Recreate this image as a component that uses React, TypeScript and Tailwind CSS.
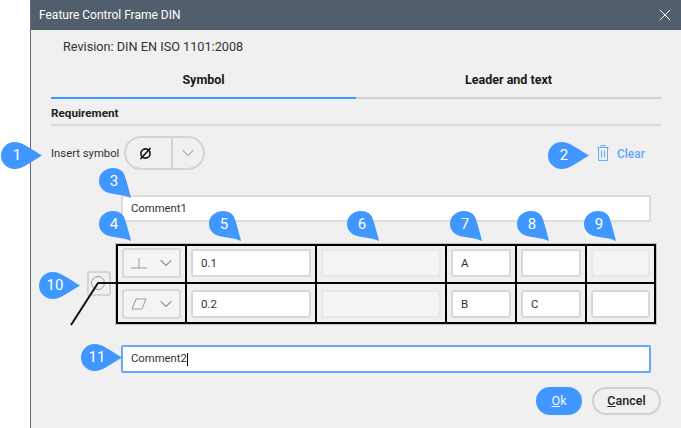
import { ChevronDown, X } from 'lucide-react';
import { FC, ReactNode } from 'react';

interface MarkerProps {
  label: string;
  pos: string;
}

// callout pointing right, tip on the middle line
const MarkerRight: FC<MarkerProps> = ({ label, pos }) => (
  <div className={`absolute h-[27px] w-[41px] ${pos}`}>
    <svg width="41" height="27" viewBox="0 0 41 27" className="absolute inset-0">
      <path d="M13.5 0C22 0 31 8 41 13.5C31 19 22 27 13.5 27A13.5 13.5 0 0 1 13.5 0Z" fill="#3f97ff" />
    </svg>
    <span className="absolute left-0 top-0 w-[32px] text-center text-[15px] leading-[27px] text-white">{label}</span>
  </div>
);

// callout pointing down and to the right
const MarkerDown: FC<MarkerProps> = ({ label, pos }) => (
  <div className={`absolute h-[32px] w-[34px] ${pos}`}>
    <svg width="34" height="32" viewBox="0 0 34 32" className="absolute inset-0">
      <path d="M1 14C1 6.5 7 1 15 1C21 1 25 4 26.5 8C29 15 31 23 33 31C25 27 16 28 9.5 25.5C4.5 23.5 1 19.5 1 14Z" fill="#3f97ff" />
    </svg>
    <span className="absolute left-0 top-0 w-[32px] text-center text-[15px] leading-[28px] text-white">{label}</span>
  </div>
);

const TextCell: FC<{ value?: string; disabled?: boolean }> = ({ value, disabled }) => (
  <div
    className={`h-[28px] w-full rounded-[3px] border-2 pl-[8px] text-[11.5px] leading-[24px] text-[#333] ${
      disabled ? 'border-[#e8e8e8] bg-[#f4f4f4]' : 'border-[#d8d8d8] bg-white'
    }`}
  >
    {value}
  </div>
);

const SelectCell: FC<{ children: ReactNode }> = ({ children }) => (
  <div className="flex h-[30px] w-full items-center justify-between rounded-[3px] border-2 border-[#d8d8d8] bg-[#f4f4f4] pl-[7px] pr-[3px]">
    <svg width="18" height="14" viewBox="0 0 18 14" fill="none" stroke="#999" strokeWidth="1">
      {children}
    </svg>
    <ChevronDown size={20} strokeWidth={1.4} color="#999" />
  </div>
);

const Cell: FC<{ children?: ReactNode; last?: boolean; bottom?: boolean }> = ({ children, last, bottom }) => (
  <div
    className={`flex h-[38px] items-center justify-center border-black px-[4px] ${last ? '' : 'border-r-2'} ${
      bottom ? 'pt-[2px]' : 'border-b-2 pb-[2px]'
    }`}
  >
    {children}
  </div>
);

export default function App() {
  return (
    <div className="relative flex h-[428px] w-[681px] overflow-hidden bg-white font-['Roboto',sans-serif]">
      <div className="ml-[30px] flex flex-1 flex-col border-l border-[#626d80] bg-[#f0f0f0]">
        <div className="flex h-[30px] shrink-0 items-center justify-between bg-[#525e6b] pl-[8px] pr-[6px] text-[12px] text-white">
          <span>Feature Control Frame DIN</span>
          <X size={20} strokeWidth={1.2} color="#fff" />
        </div>

        <div className="flex flex-1 flex-col px-[20px]">
          <div className="pl-[12px] pt-[10px] text-[12.7px] leading-[14px] text-[#333]">Revision: DIN EN ISO 1101:2008</div>

          <div className="mt-[13px] flex h-[32px] border-b-2 border-[#d0d0d0] text-[12.5px] font-bold text-[#1a1a1a]">
            <div className="-mb-[2px] w-[305px] border-b-2 border-[#3f97ff] pt-[4px] text-center">Symbol</div>
            <div className="flex-1 pt-[4px] text-center">Leader and text</div>
          </div>

          <div className="flex h-[27px] items-center border-b-2 border-[#d8d8d8] pt-[4px] text-[11.7px] font-bold text-[#222]">
            Requirement
          </div>

          <div className="mt-[10px] flex h-[34px] items-center">
            <span className="w-[73px] pt-[2px] text-[11.3px] text-[#333]">Insert symbol</span>
            <div className="flex h-[34px] w-[81px] items-center rounded-full border-2 border-[#d4d4d4]">
              <div className="flex h-full w-[47px] items-center justify-center border-r-2 border-[#d4d4d4] pr-[6px]">
                <svg width="13" height="13" viewBox="0 0 13 13" fill="none" stroke="#111" strokeWidth="1.6">
                  <circle cx="6.5" cy="6.5" r="4.6" />
                  <path d="M1.5 12L11.5 1" />
                </svg>
              </div>
              <div className="flex flex-1 items-center justify-center">
                <ChevronDown size={20} strokeWidth={1.2} color="#888" />
              </div>
            </div>
            <div className="ml-auto mr-[16px] flex items-center text-[12px] font-medium text-[#66a8ff]">
              <svg width="12" height="16" viewBox="0 0 12 16" fill="none" stroke="#66a8ff" strokeWidth="1" className="mr-[8px]">
                <path d="M0.5 2.5H11.5M4 2.5V0.5H8V2.5M1.5 2.5V15.5H10.5V2.5M4.5 5.5V12.5M7.5 5.5V12.5" />
              </svg>
              <span className="pt-[2px]">Clear</span>
            </div>
          </div>

          <div className="ml-[70px] mt-[25px] h-[27px] w-[530px] rounded-[2px] border-2 border-[#dcdcdc] bg-white pl-[8px] text-[11.3px] leading-[24px] text-[#333]">
            Comment1
          </div>

          <div className="ml-[65px] mt-[22px] grid w-[540px] grid-cols-[69px_130px_130px_70px_70px_67px] border-2 border-black shadow-[0_0_0_1px_#c4c4c4]">
            <Cell>
              <SelectCell>
                <path d="M0 12H16M8 2V12" />
              </SelectCell>
            </Cell>
            <Cell>
              <TextCell value="0.1" />
            </Cell>
            <Cell>
              <TextCell disabled />
            </Cell>
            <Cell>
              <TextCell value="A" />
            </Cell>
            <Cell>
              <TextCell />
            </Cell>
            <Cell last>
              <TextCell disabled />
            </Cell>
            <Cell bottom>
              <SelectCell>
                <path d="M5 2H15L11 12H1Z" />
              </SelectCell>
            </Cell>
            <Cell bottom>
              <TextCell value="0.2" />
            </Cell>
            <Cell bottom>
              <TextCell disabled />
            </Cell>
            <Cell bottom>
              <TextCell value="B" />
            </Cell>
            <Cell bottom>
              <TextCell value="C" />
            </Cell>
            <Cell last bottom>
              <TextCell />
            </Cell>
          </div>

          <div className="ml-[70px] mt-[21px] flex h-[28px] w-[530px] items-center rounded-[2px] border-2 border-[#66a8ff] bg-white pl-[8px] text-[11.3px] text-[#333]">
            Comment2
            <span className="h-[13px] w-px bg-black" />
          </div>

          <div className="mt-[14px] flex justify-end gap-[10px] text-[12.5px]">
            <div className="flex h-[28px] w-[46px] items-center justify-center rounded-full bg-[#3f97ff] text-[#f2f7ff]">
              <span>
                <span className="underline">O</span>k
              </span>
            </div>
            <div className="flex h-[28px] w-[69px] items-center justify-center rounded-full border-2 border-[#d0d0d0] font-medium text-[#222]">
              <span>
                <span className="underline">C</span>ancel
              </span>
            </div>
          </div>
        </div>
      </div>

      {/* leader symbol lies over the table edge */}
      <div className="absolute left-[87px] top-[271px] h-[25px] w-[24px] rounded-[3px] border-2 border-[#d4d4d4]" />
      <svg width="60" height="60" viewBox="0 0 60 60" fill="none" className="absolute left-[65px] top-[270px]">
        <circle cx="33" cy="13" r="6.5" stroke="#999" strokeWidth="1" />
        <path d="M6 55L33 13H52" stroke="#111" strokeWidth="2" />
      </svg>

      <MarkerRight label="1" pos="left-[1px] top-[142px]" />
      <MarkerRight label="2" pos="left-[548px] top-[142px]" />
      <MarkerDown label="3" pos="left-[98px] top-[167px]" />
      <MarkerDown label="4" pos="left-[98px] top-[210px]" />
      <MarkerDown label="5" pos="left-[208px] top-[210px]" />
      <MarkerDown label="6" pos="left-[346px] top-[210px]" />
      <MarkerDown label="7" pos="left-[449px] top-[210px]" />
      <MarkerDown label="8" pos="left-[516px] top-[210px]" />
      <MarkerDown label="9" pos="left-[583px] top-[210px]" />
      <MarkerRight label="10" pos="left-[39px] top-[272px]" />
      <MarkerRight label="11" pos="left-[81px] top-[344px]" />
    </div>
  );
}
